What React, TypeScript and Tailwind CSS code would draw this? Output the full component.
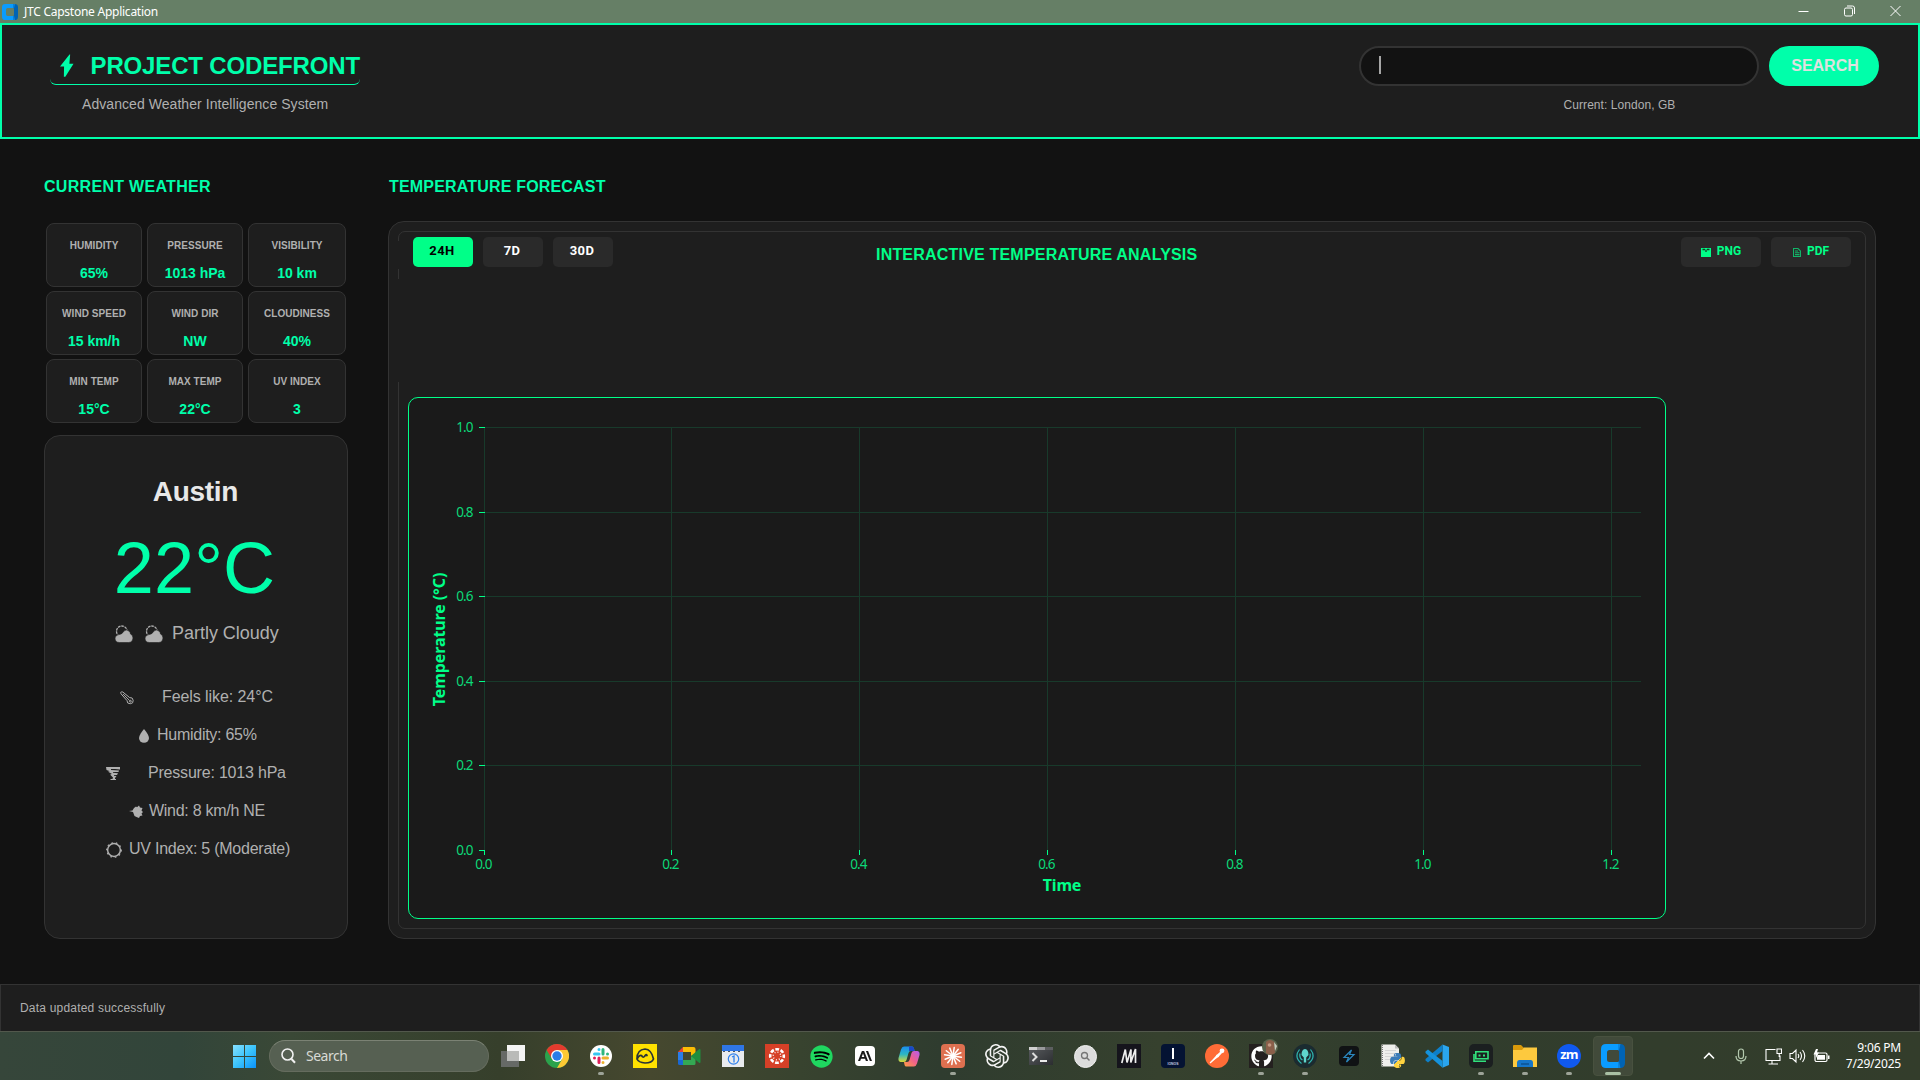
import React from "react";
import { FaPython, FaSpotify, FaGithub } from "react-icons/fa6";
import { SiOpenai, SiAnthropic } from "react-icons/si";

const stats = [
  ["HUMIDITY", "65%"],
  ["PRESSURE", "1013 hPa"],
  ["VISIBILITY", "10 km"],
  ["WIND SPEED", "15 km/h"],
  ["WIND DIR", "NW"],
  ["CLOUDINESS", "40%"],
  ["MIN TEMP", "15°C"],
  ["MAX TEMP", "22°C"],
  ["UV INDEX", "3"],
];

function AppLogo({ size }: { size: number }) {
  return (
    <svg width={size} height={size} viewBox="0 0 24 24">
      <path d="M5 0H19V6H8.500Q6 6 6 8.500V15.500Q6 18 8.500 18H19V24H5Q0 24 0 19V5Q0 0 5 0Z" fill="#0a9cff" />
      <path d="M17 0H19Q24 0 24 5V19Q24 24 19 24H17V18L18 17V7L17 6Z" fill="#0063b4" />
      <path d="M17 0H19.500L18 6.500L17 6ZM17 24H19.500L18 17.500L17 18Z" fill="#0a86e0" />
    </svg>
  );
}

function TitleBar() {
  return (
    <div className="flex h-[23px] items-center justify-between bg-[#667f66] pl-[2px]">
      <div className="flex items-center gap-[6px]">
        <AppLogo size={16} />
        <span className="font-['Noto_Sans','Open_Sans',sans-serif] text-[12px] leading-[22px] tracking-[-0.25px] text-white">
          JTC Capstone Application
        </span>
      </div>
      <div className="flex gap-[35px] pr-[19px] pb-[2px]">
        <svg width="11" height="12" viewBox="0 0 11 12" fill="none" stroke="#fff">
          <path d="M0.500 6.500H10.500" />
        </svg>
        <svg width="11" height="12" viewBox="0 0 11 12" fill="none" stroke="#fff">
          <rect x="0.500" y="3" width="8" height="8" rx="1.500" />
          <path d="M3 1H8.500Q10.500 1 10.500 3V9" />
        </svg>
        <svg width="11" height="12" viewBox="0 0 11 12" fill="none" stroke="#fff">
          <path d="M0.500 1L10.500 11M10.500 1L0.500 11" />
        </svg>
      </div>
    </div>
  );
}

function Header() {
  return (
    <header className="flex h-[116px] justify-between border-2 border-[#00ffaa] bg-[#1e1e1e] pr-[39px] pl-[48px]">
      <div className="w-[310px]">
        <div className="mt-[21px] flex h-[39px] rounded-b-[6px] border-b border-[#00ffaa] pl-[10px]">
          <svg width="14" height="24" viewBox="0 0 14 24" className="mt-[8px]">
            <path d="M9.800 0L0 12.500H4.200L4 23H5.500L14 9.700H9.700L10.500 0Z" fill="#00ffaa" />
          </svg>
          <h1 className="ml-[17px] text-[24px] leading-[39px] font-bold tracking-[-0.15px] whitespace-nowrap text-[#00ffaa]">
            PROJECT CODEFRONT
          </h1>
        </div>
        <p className="mt-[10px] pl-[32px] text-[14px] leading-[18px] tracking-[0.06px] whitespace-nowrap text-[#b0b0b0]">
          Advanced Weather Intelligence System
        </p>
      </div>
      <div className="mt-[21px] w-[520px]">
        <div className="flex gap-[10px]">
          <div className="flex h-[40px] w-[400px] items-center rounded-[20px] border-2 border-[#333333] bg-[#121212] pl-[18px]">
            <span className="mb-[2px] h-[18px] w-[2px] bg-[#a6a6a6]" />
          </div>
          <button className="h-[40px] w-[110px] rounded-[20px] bg-[#00ffaa] pb-px pl-[2px] text-[16px] font-bold text-[#e0e0e0]">
            SEARCH
          </button>
        </div>
        <p className="mt-[10px] pl-px text-center text-[12px] leading-[18px] tracking-[0.06px] text-[#b0b0b0]">
          Current: London, GB
        </p>
      </div>
    </header>
  );
}

function CloudIcon() {
  return (
    <svg width="18" height="18" viewBox="0 0 18 18">
      <circle cx="6.800" cy="6.300" r="5.300" fill="none" stroke="#b0b0b0" strokeWidth="1.300" strokeDasharray="2.600 0.800" />
      <path d="M4.500 17.500Q0 17.500 0 13Q0.500 10 4 9.500Q7 9.500 9 6Q11 4 14 6Q15.500 7.500 15.500 9Q18 10 18 13Q17.500 17.500 13.500 17.500Z" fill="#b0b0b0" stroke="#1e1e1e" strokeWidth="0.600" />
    </svg>
  );
}

function ThermometerIcon() {
  return (
    <svg width="14" height="14" viewBox="0 0 14 14" fill="none" stroke="#b0b0b0">
      <path d="M1 2.800Q-0.200 0.400 2.800 1L9.600 6.600A3.100 3.100 0 1 1 7 9.600Z" />
      <path d="M3 3L9.500 9.500" strokeWidth="0.900" />
      <circle cx="10.400" cy="10.200" r="0.900" />
    </svg>
  );
}
function DropIcon() {
  return (
    <svg width="10" height="14" viewBox="0 0 10 14">
      <path d="M5 0Q10 6 10 9A5 4.800 0 0 1 0 9Q0 6 5 0Z" fill="#b0b0b0" />
    </svg>
  );
}
function TornadoIcon() {
  return (
    <svg width="14" height="13" viewBox="0 0 14 13" fill="#b0b0b0">
      <path d="M0 0H14V2.500L9 2H5V3L13 3.500L12.500 5H7V5.800L12 6.200L11 8H8V8.700L10.500 9L9 11V12H10V13H4.500V12H6.500L7 10.500L4.500 8V7.300L6 7L2.500 5V4.300H4L0.500 3Z" />
    </svg>
  );
}
function WindIcon() {
  return (
    <svg width="14" height="13" viewBox="0 0 14 13">
      <path d="M0 6L3.500 5.500L5 3L7 1.500L8 2.300L10 0.500L11 2.500L13.500 3L12.500 5.500L14 7L12.500 8.500L13.500 10.500L11 11L10 13L7.500 12L5.500 11L4 7Z" fill="#b0b0b0" />
    </svg>
  );
}
function SunIcon() {
  return (
    <svg width="16" height="16" viewBox="0 0 16 16" fill="none" stroke="#b0b0b0">
      <circle cx="8" cy="8" r="6.400" strokeWidth="1.500" />
      <circle cx="8" cy="8" r="7.300" strokeWidth="1.200" strokeDasharray="1.600 2.900" />
    </svg>
  );
}

function StatGrid() {
  return (
    <div className="ml-[2px] grid w-[300px] grid-cols-[96px_96px_98px] gap-x-[5px] gap-y-[4px]">
      {stats.map(([label, value]) => (
        <div key={label} className="flex h-[64px] flex-col items-center rounded-[8px] border border-[#333333] bg-[#1e1e1e]">
          <span className="mt-[16px] text-[10px] leading-[12px] font-bold tracking-[0.05px] whitespace-nowrap text-[#b0b0b0]">{label}</span>
          <span className="mt-[11px] h-[24px] bg-[#1e1e1e] text-[14px] leading-[21px] font-bold whitespace-nowrap text-[#00ffaa]">{value}</span>
        </div>
      ))}
    </div>
  );
}

interface DetailProps {
  icon: React.ReactNode;
  left: number;
  gap: number;
  tracking: string;
  children: React.ReactNode;
}

function Detail({ icon, left, gap, tracking, children }: DetailProps) {
  return (
    <div className="flex h-[38px] items-center" style={{ paddingLeft: left }}>
      <span className="mt-[1px] [&>svg]:block">{icon}</span>
      <span className={`${tracking} text-[16px] leading-[20px] whitespace-nowrap text-[#b0b0b0]`} style={{ marginLeft: gap }}>
        {children}
      </span>
    </div>
  );
}

function WeatherCard() {
  return (
    <div className="mt-[12px] h-[504px] w-[304px] rounded-[16px] border border-[#333333] bg-[#1e1e1e]">
      <h3 className="mt-[36px] ml-[-1px] text-center text-[28px] leading-[40px] font-bold tracking-[-0.3px] text-[#e8e8e8]">Austin</h3>
      <div className="mt-[16px] ml-[-3px] text-center text-[72px] leading-[80px] tracking-[0.1px] text-[#00ffaa]">22°C</div>
      <div className="mt-[13px] flex items-center pl-[70px]">
        <CloudIcon />
        <span className="w-[12px]" />
        <CloudIcon />
        <span className="mb-[1px] ml-[9px] text-[18px] leading-[24px] tracking-[-0.02px] text-[#b0b0b0]">Partly Cloudy</span>
      </div>
      <div className="mt-[32px]">
        <Detail icon={<ThermometerIcon />} left={75} gap={28} tracking="tracking-[-0.08px]">Feels like: 24°C</Detail>
        <Detail icon={<DropIcon />} left={94} gap={8} tracking="tracking-[-0.27px]">Humidity: 65%</Detail>
        <Detail icon={<TornadoIcon />} left={61} gap={28} tracking="tracking-[-0.2px]">Pressure: 1013 hPa</Detail>
        <Detail icon={<WindIcon />} left={84} gap={6} tracking="tracking-[-0.27px]">Wind: 8 km/h NE</Detail>
        <Detail icon={<SunIcon />} left={61} gap={7} tracking="tracking-[-0.24px]">UV Index: 5 (Moderate)</Detail>
      </div>
    </div>
  );
}

const xTicks: [number, string][] = [[76, "0.0"], [263, "0.2"], [451, "0.4"], [639, "0.6"], [827, "0.8"], [1015, "1.0"], [1203, "1.2"]];
const yTicks: [number, string][] = [[30, "1.0"], [115, "0.8"], [199, "0.6"], [284, "0.4"], [368, "0.2"], [453, "0.0"]];

function Chart() {
  return (
    <div className="h-[522px] w-[1258px] rounded-[10px] border border-[#00ff88] bg-[#1a1a1a]">
      <svg width="1256" height="520" viewBox="1 1 1256 520" className="font-['Noto_Sans','Open_Sans',sans-serif]" fill="#00ff88">
        {xTicks.map(([x, label]) => (
          <g key={label}>
            <path d={`M${x + 0.5} 30V453`} stroke="#183a2b" />
            <path d={`M${x + 0.5} 453V458`} stroke="#00ff88" />
            <text x={x - 0.6} y="472" fontSize="13.500" textAnchor="middle" letterSpacing="-0.9" fill="#0cd878">{label}</text>
          </g>
        ))}
        {yTicks.map(([y, label]) => (
          <g key={label}>
            {label !== "0.0" && <path d={`M76 ${y + 0.5}H1233`} stroke="#183a2b" />}
            <path d={`M71 ${y + 0.5}H77`} stroke="#00ff88" />
            <text x="64.500" y={y + 5} fontSize="13.500" textAnchor="end" letterSpacing="-0.9" fill="#0cd878">{label}</text>
          </g>
        ))}
        <text x="654" y="494" fontSize="16" fontWeight="700" textAnchor="middle" letterSpacing="-0.2">Time</text>
        <text transform="translate(37 242.500) rotate(-90)" fontSize="16" fontWeight="700" textAnchor="middle" letterSpacing="-0.1">Temperature (°C)</text>
      </svg>
    </div>
  );
}

const rangeButton = "mt-[-4px] h-[30px] w-[60px] rounded-[5px] pr-[8px] pb-[2px] font-['Roboto',sans-serif] text-[13px] font-bold tracking-[0.4px]";
const exportButton =
  "flex h-[30px] w-[80px] items-center justify-center gap-[6px] rounded-[5px] bg-[#2a2a2a] pb-[2px] font-['Roboto',sans-serif] text-[12px] font-bold text-[#00ff88]";

function ForecastPanel() {
  return (
    <div className="h-[718px] w-[1488px] rounded-[16px] border border-[#333333] bg-[#1e1e1e] p-[9px]">
      <div className="h-[698px] rounded-[7px] border border-[#333333]">
        <div className="ml-[-1px] flex h-[38px] items-start pt-[5px] pr-[14px]">
          <div className="w-[478px]">
            <div className="mt-[4px] h-[28px] bg-[#1e1e1e]">
              <div className="flex gap-[10px] pl-[15px]">
                <button className={`${rangeButton} bg-[#00ff88] pl-[6px] text-black`}>24H</button>
                <button className={`${rangeButton} bg-[#2a2a2a] pl-[6px] text-white`}>7D</button>
                <button className={`${rangeButton} bg-[#2a2a2a] pl-[6px] text-white`}>30D</button>
              </div>
            </div>
          </div>
          <h2 className="mt-[6px] text-[16px] leading-[24px] font-bold tracking-[0.2px] whitespace-nowrap text-[#00ff88]">INTERACTIVE TEMPERATURE ANALYSIS</h2>
          <div className="ml-auto flex gap-[10px]">
            <button className={exportButton}>
              <svg width="10" height="9" viewBox="0 0 10 9" className="mt-[3px]">
                <path d="M0 0H10V9H0Z" fill="#00ff88" />
                <path d="M1.500 1.500H4M6 1.500H8.500M5 1.500V4" stroke="#163a26" strokeWidth="1.300" />
              </svg>
              PNG
            </button>
            <button className={exportButton}>
              <svg width="8" height="9" viewBox="0 0 8 9" className="mt-[3px]" fill="none" stroke="#12b468" strokeWidth="1.100">
                <path d="M0.500 0.500H5L7.500 3V8.500H0.500ZM2 3H5M2 4.800H6.500M2 6.600H6.500" />
              </svg>
              PDF
            </button>
          </div>
        </div>
        <div className="mt-[9px] ml-[-1px] h-[103px] w-[1000px] bg-[#1e1e1e]" />
        <div className="mt-[15px] pl-[9px]">
          <Chart />
        </div>
      </div>
    </div>
  );
}

function Tile({ children, dot, active }: { children: React.ReactNode; dot?: boolean; active?: boolean }) {
  return (
    <div className="flex h-[48px] w-[44px] items-center justify-center">
      <div className={`relative flex h-[40px] w-[40px] items-center justify-center rounded-[4px] ${active ? "border border-[#48513f] bg-[#414a3a]" : ""}`}>
        {children}
        {dot && <span className="absolute bottom-[1px] left-[17px] h-[3px] w-[6px] rounded-full bg-[#9da398]" />}
        {active && <span className="absolute bottom-0 left-[11px] h-[3px] w-[16px] rounded-full bg-[#a9c0a4]" />}
      </div>
    </div>
  );
}

const rays = Array.from({ length: 12 }, (_, i) => i * 30);

function Taskbar() {
  return (
    <footer className="flex h-[49px] items-center justify-between border-t border-[#52584c] bg-[linear-gradient(90deg,#36463a_0px,#32453a_180px,#3a4836_290px,#363f2b_500px,#46482f_650px,#38432f_800px,#2f3c2f_940px,#36412e_1160px,#313d2d_1400px,#333d2b_1920px)]">
      <div className="flex items-center pl-[233px]">
        <svg width="23" height="23" viewBox="0 0 23 23">
          <defs>
            <linearGradient id="win" x1="0" y1="0" x2="1" y2="1">
              <stop offset="0" stopColor="#86e0ff" />
              <stop offset="0.500" stopColor="#3cc4fc" />
              <stop offset="1" stopColor="#0a92fb" />
            </linearGradient>
          </defs>
          <path d="M0 0H11V11H0ZM12 0H23V11H12ZM0 12H11V23H0ZM12 12H23V23H12Z" fill="url(#win)" />
        </svg>
        <div className="ml-[13px] flex h-[32px] w-[220px] items-center rounded-full border border-[#656c5e] border-t-[#7b8274] bg-[#566052] pl-[11px]">
          <svg width="15" height="16" viewBox="0 0 15 16" fill="none" stroke="#f2f2f2" strokeWidth="1.600">
            <circle cx="6.500" cy="6.500" r="5.500" />
            <path d="M10.500 11L14 14.800" strokeWidth="2" />
          </svg>
          <span className="mb-px ml-[10px] font-['Noto_Sans','Open_Sans',sans-serif] text-[14px] tracking-[-0.5px] text-[#d8dad5]">Search</span>
        </div>
        <div className="ml-[2px] flex">
          <Tile>
            <svg width="24" height="22" viewBox="0 0 24 22">
              <path d="M0 6H18V22H0Z" fill="#666966" />
              <path d="M6 0H24V16H6Z" fill="#f4f4f4" />
              <path d="M6 6H18V16H6Z" fill="#b9bab8" />
            </svg>
          </Tile>
          <Tile>
            <svg width="24" height="24" viewBox="0 0 24 24">
              <circle cx="12" cy="12" r="12" fill="#2ba24c" />
              <path d="M1.600 6A12 12 0 0 1 22.400 6H12L7 15Z" fill="#e33b2e" />
              <path d="M22.400 6A12 12 0 0 1 12 24L17.200 15L12 6Z" fill="#fcc934" />
              <circle cx="12" cy="12" r="6" fill="#fff" />
              <circle cx="12" cy="12" r="4.700" fill="#2a7de9" />
            </svg>
          </Tile>
          <Tile dot>
            <svg width="22" height="22" viewBox="0 0 22 22">
              <circle cx="11" cy="11" r="11" fill="#fff" />
              <g strokeWidth="3" strokeLinecap="round">
                <path d="M9 4.500V4.500M4.500 9H9" stroke="#36c5f0" />
                <path d="M17.500 9V9M13 4.500V9" stroke="#2eb67d" />
                <path d="M13 17.500V17.500M13 13H17.500" stroke="#ecb22e" />
                <path d="M4.500 13V13M9 13V17.500" stroke="#e01e5a" />
              </g>
            </svg>
          </Tile>
          <Tile>
            <svg width="24" height="24" viewBox="0 0 24 24" fill="none" stroke="#283338" strokeWidth="1.700" strokeLinecap="round">
              <path d="M0 0H24V24H0Z" fill="#ffe100" stroke="none" />
              <path d="M4 15Q4 5.500 12 5Q18.500 5.500 20.500 15Q19 19 12 19Q5.500 18.500 4 15Q6.500 10.500 8.500 11.500Q10 14 11.500 12.500Q13 9.500 14 11.500" />
            </svg>
          </Tile>
          <Tile>
            <svg width="23" height="18" viewBox="0 0 23 18">
              <path d="M5 0V5H0Z" fill="#ea4335" />
              <path d="M0 5H5V13H0Z" fill="#2a7de9" />
              <path d="M0 13H5V18H1.500Q0 18 0 16.500Z" fill="#1967d2" />
              <path d="M5 0H15.500Q17.500 0 17.500 2V7L13 9V5H5Z" fill="#fbbc04" />
              <path d="M5 13H13V9L17.500 11V16.500Q17.500 18 16 18H5Z" fill="#34a853" />
              <path d="M13 9L21 2.200Q22.500 1.500 22.500 3V15Q22.500 16.500 21 15.800Z" fill="#1e8e3e" />
            </svg>
          </Tile>
          <Tile>
            <svg width="22" height="22" viewBox="0 0 22 22">
              <path d="M0 5H22V22H0Z" fill="#e9ebee" />
              <path d="M0 0H22V6H0Z" fill="#2f76e6" />
              <path d="M1 6.500H21" stroke="#4b5563" strokeWidth="1" strokeDasharray="2 3" />
              <circle cx="11.500" cy="14" r="5.200" fill="none" stroke="#2f80ed" strokeWidth="1.200" />
              <path d="M10 12L12 11V17.500" fill="none" stroke="#2f80ed" strokeWidth="1.300" />
            </svg>
          </Tile>
          <Tile>
            <svg width="24" height="24" viewBox="0 0 24 24" fill="none" stroke="#fff">
              <path d="M0 0H24V24H0Z" fill="#d64027" stroke="none" />
              <circle cx="12" cy="12" r="6.800" strokeWidth="2.600" strokeDasharray="3.740 1.600" strokeDashoffset="1.870" />
              <circle cx="12" cy="12" r="3.800" strokeWidth="1.300" strokeDasharray="1 1.984" />
            </svg>
          </Tile>
          <Tile>
            <span className="flex h-[21px] w-[21px] items-center justify-center rounded-full bg-black">
              <FaSpotify size={23} color="#1fd760" className="shrink-0" />
            </span>
          </Tile>
          <Tile>
            <span className="flex h-[20px] w-[20px] items-center justify-center rounded-[4px] bg-white">
              <SiAnthropic size={14} color="#1b1b1b" />
            </span>
          </Tile>
          <Tile>
            <svg width="22" height="21" viewBox="0 0 22 21">
              <defs>
                <linearGradient id="cpa" x1="0" y1="0" x2="0" y2="1">
                  <stop offset="0" stopColor="#1a8df0" />
                  <stop offset="0.500" stopColor="#2bb7c4" />
                  <stop offset="1" stopColor="#d9d836" />
                </linearGradient>
                <linearGradient id="cpb" x1="1" y1="0" x2="0" y2="1">
                  <stop offset="0" stopColor="#b45cf0" />
                  <stop offset="0.500" stopColor="#f0608a" />
                  <stop offset="1" stopColor="#ffa040" />
                </linearGradient>
              </defs>
              <path d="M6 0.500H14Q16 0.500 16.500 5H13Q11 5 10.500 7L8.500 14Q8 16 6 16H2.500Q0 15.500 0.500 12L3 3.500Q4 0.500 6 0.500Z" fill="url(#cpa)" />
              <path d="M11 0.500H14Q16 0.500 16.500 5H11Z" fill="#1b48c8" />
              <path d="M16 5H19.500Q22 5.500 21.500 9L19 17.500Q18 20.500 16 20.500H8Q6.500 20.500 6 16H9Q11 16 11.500 14L13.500 7Q14 5 16 5Z" fill="url(#cpb)" />
            </svg>
          </Tile>
          <Tile dot>
            <svg width="24" height="24" viewBox="0 0 24 24">
              <rect width="24" height="24" rx="4" fill="#de7050" />
              {rays.map((a) => (
                <path key={a} d="M12 12V3.500" stroke="#fff" strokeWidth="1.500" strokeLinecap="round" transform={`rotate(${a + 8} 12 12)`} />
              ))}
            </svg>
          </Tile>
          <Tile>
            <SiOpenai size={24} color="#f4f4f4" />
          </Tile>
          <Tile>
            <svg width="24" height="18" viewBox="0 0 24 18">
              <defs>
                <linearGradient id="term" x1="0" y1="0" x2="1" y2="1">
                  <stop offset="0" stopColor="#5a5d60" />
                  <stop offset="1" stopColor="#2b2d30" />
                </linearGradient>
              </defs>
              <path d="M0 0H24V18H0Z" fill="url(#term)" />
              <path d="M0 0H8V3H0Z" fill="#d0d0d0" />
              <path d="M8 0H16V3H8Z" fill="#98999b" />
              <path d="M16 0H24V3H16Z" fill="#5c5e60" />
              <path d="M3.500 6L7.500 10L3.500 14" fill="none" stroke="#ddd" strokeWidth="2" />
              <path d="M11 14H18" stroke="#fff" strokeWidth="1.800" />
            </svg>
          </Tile>
          <Tile>
            <svg width="23" height="23" viewBox="0 0 23 23" fill="none">
              <circle cx="11.500" cy="11.500" r="11" fill="#dcdcdc" stroke="#efefef" />
              <circle cx="10.500" cy="10.500" r="3" stroke="#767676" strokeWidth="1.300" />
              <path d="M12.800 12.800L15.500 15.500" stroke="#767676" strokeWidth="1.500" />
            </svg>
          </Tile>
          <Tile>
            <svg width="24" height="24" viewBox="0 0 24 24" fill="none">
              <path d="M0 0H24V24H0Z" fill="#15141c" />
              <path d="M4.800 19L8.300 5.500L10 18.500L14 5.500L13.800 18.500L18.500 5V19" stroke="#eee" strokeWidth="1.700" strokeLinejoin="bevel" />
            </svg>
          </Tile>
          <Tile>
            <svg width="24" height="24" viewBox="0 0 24 24">
              <rect width="24" height="24" rx="4" fill="#041333" />
              <path d="M11 4H13V15H11Z" fill="#fff" />
              <text x="12" y="20.500" fontSize="3.400" fontWeight="700" fill="#c5cce0" textAnchor="middle">IONOS</text>
            </svg>
          </Tile>
          <Tile>
            <svg width="24" height="24" viewBox="0 0 24 24">
              <circle cx="12" cy="12" r="12" fill="#ff6c37" />
              <path d="M5 18.500L12 10.500L14 12.500Z" fill="#fff" />
              <path d="M11 11.500L15.500 7.500L17 9L13 13.500Z" fill="#fff" />
              <circle cx="17" cy="6.800" r="2.400" fill="#fff" />
              <path d="M5 19L12.500 12.500" stroke="#fff" strokeWidth="1.200" />
            </svg>
          </Tile>
          <Tile dot>
            <span className="relative flex h-[24px] w-[24px] items-center justify-center bg-[#24201f]">
              <FaGithub size={21} color="#fff" />
              <svg width="16" height="16" viewBox="0 0 16 16" className="absolute -top-[5px] left-[13px]">
                <circle cx="8" cy="8" r="8" fill="#59634c" />
                <path d="M4 3Q8 -1 12 3L13 14Q8 17 4 14Z" fill="#8a5f4a" />
                <circle cx="7.500" cy="6" r="1.800" fill="#c39a84" />
                <path d="M12 3L15 7L13 12Z" fill="#c8cfc0" />
              </svg>
            </span>
          </Tile>
          <Tile dot>
            <svg width="24" height="24" viewBox="0 0 24 24" fill="none" stroke="#2fb5b0" strokeWidth="1.200">
              <circle cx="12" cy="12" r="12" fill="#1b2b30" stroke="none" />
              <path d="M8.500 11Q8.500 5.500 12 5Q15.500 5.500 15.500 11L13.200 13.500V18.500H10.800V13.500Z" fill="#5fd6cd" stroke="none" />
              <path d="M6.500 5.500Q0.500 13 8.500 19.500M17.500 5.500Q23.500 13 15.500 19.500M7 9.500Q6 14 9.500 16M17 9.500Q18 14 14.500 16" />
            </svg>
          </Tile>
          <Tile>
            <svg width="20" height="20" viewBox="0 0 20 20" fill="none">
              <rect width="20" height="20" rx="4" fill="#101214" />
              <path d="M12.500 4L5 11.500H9.500L7.500 16L15 8.500H10.500Z" stroke="#2b86bd" strokeWidth="1.200" />
            </svg>
          </Tile>
          <Tile>
            <div className="relative h-[24px] w-[24px]">
              <svg width="24" height="24" viewBox="0 0 24 24">
                <defs>
                  <linearGradient id="py" x1="0" y1="0" x2="1" y2="1">
                    <stop offset="0.500" stopColor="#3b7cb8" />
                    <stop offset="0.500" stopColor="#ffd33f" />
                  </linearGradient>
                </defs>
                <path d="M0.500 0.500H14L18 4.500V22.500H0.500Z" fill="#efefec" />
                <path d="M14 0.500V4.500H18Z" fill="#bcbcbc" />
                <path d="M1.500 1V22" stroke="#777" strokeDasharray="1 1" />
                <path d="M4 6.500H15M4 9.500H15M4 12.500H13M4 15.500H10" stroke="#ccc" strokeWidth="0.700" />
              </svg>
              <FaPython size={17} className="absolute top-[8px] left-[8px] [&_path]:fill-[url(#py)]" />
            </div>
          </Tile>
          <Tile>
            <svg width="24" height="24" viewBox="0 0 24 24">
              <path d="M17.500 0.500L24 3V21L17.500 23.800Z" fill="#2aa5ee" />
              <path d="M17.500 0.500V7L3 18.500L0.500 16.500V15Z" fill="#0d7fc9" />
              <path d="M17.500 23.800V17L3 5.500L0.500 7.500V9Z" fill="#1592dc" />
            </svg>
          </Tile>
          <Tile dot>
            <svg width="24" height="24" viewBox="0 0 24 24" fill="none">
              <rect width="24" height="24" rx="5" fill="#1b1f20" />
              <path d="M6.800 7.800H19V14.800H6.800ZM17 17.200H5V10" stroke="#31e07c" strokeWidth="1.600" />
              <path d="M9.500 10.500H11.500V12.500H9.500ZM14 10.500H16V12.500H14Z" fill="#31e07c" />
            </svg>
          </Tile>
          <Tile dot>
            <svg width="24" height="22" viewBox="0 0 24 22">
              <path d="M0 1Q0 0 1 0H8L11 3V6H0Z" fill="#d99a0b" />
              <path d="M0 5H9L11 2.500H24V22H0Z" fill="#fdc93e" />
              <path d="M4 22V18Q4 15 6.500 15H17.500Q20 15 20 18V22Z" fill="#1676c9" />
              <path d="M8 19H16" stroke="#0b4e8a" strokeWidth="1.300" />
            </svg>
          </Tile>
          <Tile dot>
            <span className="h-[24px] w-[24px] rounded-full bg-[#1059f0] text-center font-['Open_Sans',sans-serif] text-[13px] leading-[21px] font-bold tracking-[-0.7px] text-white">
              zm
            </span>
          </Tile>
          <Tile active>
            <AppLogo size={24} />
          </Tile>
        </div>
      </div>
      <div className="flex items-center pr-[19px] text-white">
        <svg width="12" height="8" viewBox="0 0 12 8" fill="none" stroke="#fff" strokeWidth="1.600">
          <path d="M1 6.500L6 1.500L11 6.500" />
        </svg>
        <svg width="12" height="17" viewBox="0 0 12 17" fill="none" stroke="#b4c9ae" strokeWidth="1.200" className="ml-[20px]">
          <rect x="3.500" y="1" width="5" height="9.500" rx="2.500" />
          <path d="M1 8Q1 13 6 13Q11 13 11 8M6 13V16" />
        </svg>
        <svg width="17" height="17" viewBox="0 0 17 17" fill="none" stroke="#fff" strokeWidth="1.100" className="ml-[18px]">
          <path d="M10.500 1.500H1V12.500H15V7.500M7 12.500V16M3.500 16H13M12 1H16.500V5.500H12ZM14.200 5.500V9" />
        </svg>
        <svg width="17" height="16" viewBox="0 0 17 16" fill="none" stroke="#fff" strokeWidth="1.100" className="ml-[7px]">
          <path d="M1 5.500H3.500L7 2V14L3.500 10.500H1ZM9 6Q10.500 8 9 10M11 4Q14 8 11 12M13.500 2Q18 8 13.500 14" />
        </svg>
        <svg width="17" height="14" viewBox="0 0 17 14" className="ml-[7px]">
          <rect x="2" y="4" width="12" height="8.500" rx="1.500" fill="none" stroke="#fff" strokeWidth="1.200" />
          <path d="M4.500 6H12V10.800H4V8Z" fill="#fff" />
          <path d="M15 6.500H16.500V10H15Z" fill="#fff" />
          <path d="M3 0L0.500 5.500H3V9L6 3.500H4L5 0Z" fill="#fff" />
        </svg>
        <div className="ml-[16px] text-right font-['Noto_Sans','Open_Sans',sans-serif] text-[12px] leading-[16px] tracking-[-0.2px]">
          <div>9:06 PM</div>
          <div>7/29/2025</div>
        </div>
      </div>
    </footer>
  );
}

export default function App() {
  return (
    <div className="flex h-[1080px] w-[1920px] flex-col overflow-hidden bg-[#121212] font-['Liberation_Sans',Arial,sans-serif]">
      <TitleBar />
      <Header />
      <main className="flex h-[845px] gap-[40px] pl-[44px]">
        <section className="w-[304px]">
          <h2 className="mt-[36px] mb-[24px] text-[16px] leading-[24px] font-bold tracking-[0.3px] whitespace-nowrap text-[#00ffaa]">CURRENT WEATHER</h2>
          <StatGrid />
          <WeatherCard />
        </section>
        <section className="w-[1488px]">
          <h2 className="mt-[36px] mb-[22px] ml-px text-[16px] leading-[24px] font-bold tracking-[0.18px] whitespace-nowrap text-[#00ffaa]">
            TEMPERATURE FORECAST
          </h2>
          <ForecastPanel />
        </section>
      </main>
      <div className="h-[47px] border border-b-0 border-[#333333] bg-[#1e1e1e] pl-[19px] text-[12px] leading-[46px] tracking-[0.2px] text-[#b0b0b0]">
        Data updated successfully
      </div>
      <Taskbar />
    </div>
  );
}
